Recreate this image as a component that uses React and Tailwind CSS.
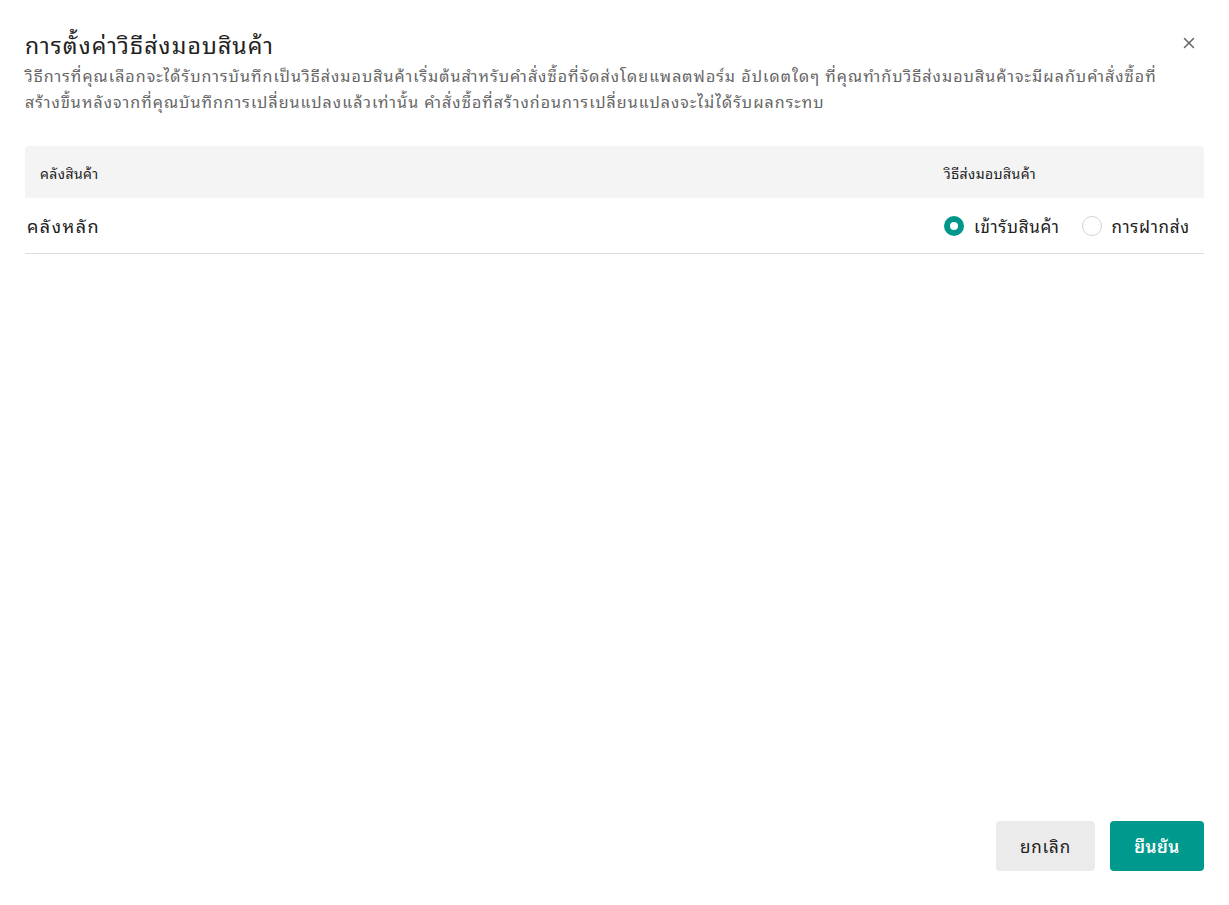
import { X } from 'lucide-react'

const font = { fontFamily: 'Tahoma, "Noto Sans Thai Looped", Garuda, Loma, "Tlwg Typo", Kinnari, "Noto Sans", sans-serif' }

function Radio({ checked, label }) {
  return (
    <label className="flex items-center gap-[10px] cursor-pointer">
      {checked ? (
        <span className="w-5 h-5 rounded-full bg-[#00968a] flex items-center justify-center">
          <span className="w-2 h-2 rounded-full bg-white" />
        </span>
      ) : (
        <span className="w-5 h-5 rounded-full border border-[#d4d4d4] bg-white" />
      )}
      <span className="text-[17px] tracking-[0.04em] text-[#222]">{label}</span>
    </label>
  )
}

export default function App() {
  return (
    <div className="w-[1229px] h-[905px] bg-white flex flex-col px-[25px] pt-[28px] pb-[34px]" style={font}>
      <div className="flex items-start justify-between">
        <h2 className="text-[23px] tracking-[0.05em] leading-[32px] text-[#222]">การตั้งค่าวิธีส่งมอบสินค้า</h2>
        <button className="mt-[6px] mr-[6px] text-[#666]">
          <X size={18} strokeWidth={2} />
        </button>
      </div>
      <p className="text-[16px] tracking-[0.065em] leading-[26px] text-[#666] mt-[2px] pr-[40px]">
        วิธีการที่คุณเลือกจะได้รับการบันทึกเป็นวิธีส่งมอบสินค้าเริ่มต้นสำหรับคำสั่งซื้อที่จัดส่งโดยแพลตฟอร์ม อัปเดตใดๆ ที่คุณทำกับวิธีส่งมอบสินค้าจะมีผลกับคำสั่งซื้อที่สร้างขึ้นหลังจากที่คุณบันทึกการเปลี่ยนแปลงแล้วเท่านั้น คำสั่งซื้อที่สร้างก่อนการเปลี่ยนแปลงจะไม่ได้รับผลกระทบ
      </p>

      <div className="mt-[32px]">
        <div className="flex items-center h-[52px] bg-[#f4f4f4] rounded-t-[4px] text-[14px] tracking-[0.03em] text-[#222]">
          <div className="flex-1 pl-[15px]">คลังสินค้า</div>
          <div className="w-[260px]">วิธีส่งมอบสินค้า</div>
        </div>
        <div className="flex items-center h-[56px] border-b border-[#dcdcdc]">
          <div className="flex-1 pl-[2px] text-[18px] tracking-[0.08em] text-[#222]">คลังหลัก</div>
          <div className="w-[260px] flex items-center gap-[22px]">
            <Radio checked label="เข้ารับสินค้า" />
            <Radio label="การฝากส่ง" />
          </div>
        </div>
      </div>

      <div className="flex-1" />

      <div className="flex justify-end gap-[15px]">
        <button className="w-[99px] h-[50px] rounded-[4px] bg-[#ebebeb] text-[17px] tracking-[0.05em] text-[#222]">ยกเลิก</button>
        <button className="w-[94px] h-[50px] rounded-[4px] bg-[#00998d] text-[17px] tracking-[0.03em] font-semibold text-white">ยืนยัน</button>
      </div>
    </div>
  )
}
